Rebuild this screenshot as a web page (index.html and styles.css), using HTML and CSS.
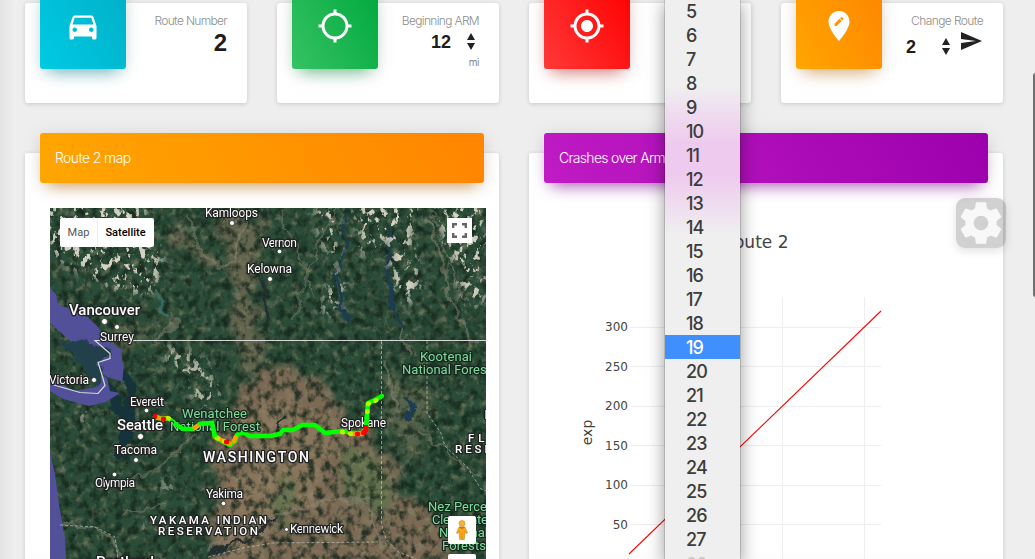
FILE: index.html
```html
<!DOCTYPE html>
<html lang="en">
<head>
<meta charset="utf-8">
<title>Route dashboard</title>
<link rel="stylesheet" href="styles.css">
</head>
<body>
<main class="dashboard">
  <section class="card stat">
    <div class="tile cyan"><svg class="icon" viewBox="0 0 24 24"><path d="M18.92 6.01C18.72 5.42 18.16 5 17.5 5h-11c-.66 0-1.21.42-1.42 1.01L3 12v8c0 .55.45 1 1 1h1c.55 0 1-.45 1-1v-1h12v1c0 .55.45 1 1 1h1c.55 0 1-.45 1-1v-8l-2.08-5.99zM6.5 16c-.83 0-1.5-.67-1.5-1.5S5.67 13 6.5 13s1.5.67 1.5 1.5S7.33 16 6.5 16zm11 0c-.83 0-1.5-.67-1.5-1.5s.67-1.5 1.5-1.5 1.5.67 1.5 1.5-.67 1.5-1.5 1.5zM5 11l1.5-4.5h11L19 11H5z"/></svg></div>
    <div class="info"><p class="label">Route Number</p><p class="big">2</p></div>
  </section>
  <section class="card stat">
    <div class="tile green"><svg class="icon" viewBox="0 0 24 24"><path d="M20.94 11c-.46-4.17-3.77-7.48-7.94-7.94V1h-2v2.06C6.83 3.52 3.52 6.83 3.06 11H1v2h2.06c.46 4.17 3.77 7.48 7.94 7.94V23h2v-2.06c4.17-.46 7.48-3.77 7.94-7.94H23v-2h-2.06zM12 19c-3.87 0-7-3.13-7-7s3.13-7 7-7 7 3.13 7 7-3.13 7-7 7z"/></svg></div>
    <div class="info"><p class="label">Beginning ARM</p>
      <div class="pick arm"><span>12</span><svg class="arrows" viewBox="0 0 8 17"><path d="M4 0l4 7H0zM0 10h8l-4 7z"/></svg></div>
      <p class="unit">mi</p></div>
  </section>
  <section class="card stat">
    <div class="tile red"><svg class="icon" viewBox="0 0 24 24"><path d="M12 8c-2.21 0-4 1.79-4 4s1.79 4 4 4 4-1.79 4-4-1.79-4-4-4zm8.94 3c-.46-4.17-3.77-7.48-7.94-7.94V1h-2v2.06C6.83 3.52 3.52 6.83 3.06 11H1v2h2.06c.46 4.17 3.77 7.48 7.94 7.94V23h2v-2.06c4.17-.46 7.48-3.77 7.94-7.94H23v-2h-2.06zM12 19c-3.87 0-7-3.13-7-7s3.13-7 7-7 7 3.13 7 7-3.13 7-7 7z"/></svg></div>
  </section>
  <section class="card stat">
    <div class="tile orange"><svg class="icon" viewBox="0 0 24 24"><path d="M12 2C8.14 2 5 5.14 5 9c0 5.25 7 13 7 13s7-7.75 7-13c0-3.86-3.14-7-7-7zm-1.56 10H9v-1.44l3.35-3.34 1.43 1.43L10.44 12zm4.45-4.45l-.7.7-1.44-1.44.7-.7c.15-.15.39-.15.54 0l.9.9c.15.15.15.39 0 .54z"/></svg></div>
    <div class="info"><p class="label change">Change Route</p>
      <div class="pick route"><span>2</span><svg class="arrows" viewBox="0 0 8 17"><path d="M4 0l4 7H0zM0 10h8l-4 7z"/></svg><svg class="send" viewBox="2 3 21 18"><path d="M2.01 21L23 12 2.01 3 2 10l15 2-15 2z"/></svg></div></div>
  </section>

  <section class="card panel">
    <h2 class="bar orange-bar">Route 2 map</h2>
    <div class="map">
      <svg class="terrain" viewBox="50 208 436 351" width="436" height="351">
        <defs>
          <filter id="soft" x="-30%" y="-30%" width="160%" height="160%"><feGaussianBlur stdDeviation="6"/></filter>
          <filter id="rough" x="-10%" y="-10%" width="120%" height="120%"><feTurbulence type="fractalNoise" baseFrequency=".06" numOctaves="4" seed="4" result="n"/><feDisplacementMap in="SourceGraphic" in2="n" scale="16" xChannelSelector="R" yChannelSelector="G"/><feGaussianBlur stdDeviation=".7"/></filter>
          <filter id="blend" x="-10%" y="-10%" width="120%" height="120%"><feTurbulence type="fractalNoise" baseFrequency=".05" numOctaves="4" seed="7" result="n"/><feDisplacementMap in="SourceGraphic" in2="n" scale="34" xChannelSelector="R" yChannelSelector="G"/><feGaussianBlur stdDeviation="3"/></filter>
          <filter id="relief" x="0" y="0" width="100%" height="100%" color-interpolation-filters="sRGB"><feTurbulence type="fractalNoise" baseFrequency=".13 .11" numOctaves="5" seed="8"/><feColorMatrix values="0 0 0 0 .07  0 0 0 0 .14  0 0 0 0 .1  3 0 0 0 -1.3"/></filter>
          <filter id="light" x="0" y="0" width="100%" height="100%" color-interpolation-filters="sRGB"><feTurbulence type="fractalNoise" baseFrequency=".12" numOctaves="5" seed="21"/><feColorMatrix values="0 0 0 0 .55  0 0 0 0 .54  0 0 0 0 .42  0 2.4 0 0 -1.2"/></filter>
          <filter id="peaks" x="0" y="0" width="100%" height="100%" color-interpolation-filters="sRGB"><feTurbulence type="fractalNoise" baseFrequency=".15 .11" numOctaves="4" seed="12"/><feColorMatrix values="0 0 0 0 .84  0 0 0 0 .82  0 0 0 0 .76  0 11 0 0 -6.2"/></filter>
          <mask id="snowfields"><g fill="#fff" filter="url(#soft)">
            <path d="M45 200H145L148 230 164 260 156 292 124 294 85 275 45 250z"/>
            <path d="M315 200l22 0 2 70 8 15-16 34-10-10 15-42-18-35zM352 200H420L412 240 422 285 412 308 392 285 386 235 362 260zM430 200H486V300L465 310 455 270z"/>
            <path opacity=".8" d="M160 352l15-8 32 16 18 45-22 10-20-30z"/>
            <path opacity=".7" d="M160 480h16v12h-16zM75 410h18v14H75zM141 522h12v12h-12z"/></g></mask>
        </defs>
        <rect x="50" y="208" width="436" height="351" fill="#2b4c38"/>
        <g filter="url(#blend)">
          <path fill="#7b6b55" d="M238 395l30-25 30-4 28 10 10 32 30 22 30 35 5 28 28 22 28 38-35 20H205l5-50 8-45-12-30 25-30z"/>
          <path fill="#8e775d" opacity=".75" d="M250 410l42-14 48 35-22 34 10 40-50 10-38 50-24-6 10-60 22-40z"/>
          <path fill="#62714e" opacity=".9" d="M345 440l35 18 16 36-10 28-30-18-16-32zM275 475l15 5 4 44-18 3z"/>
          <path fill="#7c705a" opacity=".7" d="M235 208l30 12-4 30-8 50 14 60-18 30-22-78 8-60-20-28zM178 208l15 38 32 20-8 8-45-32z"/>
          <path fill="#6d7055" opacity=".65" d="M105 325l18 8 38-10 25-18-18 25-42 24-20-6zM380 370l50 18-10 70-25-20z"/>
        </g>
        <rect x="50" y="208" width="436" height="351" filter="url(#light)" opacity=".75"/>
        <rect x="50" y="208" width="436" height="351" filter="url(#relief)" opacity=".8"/>
        <g fill="none" stroke-linecap="round" filter="url(#rough)">
          <path stroke="#1f3c50" stroke-width="4" d="M343 220v30l-6 24 2 35 10 8M389 230v40l3 40 9 18M407 397l8 12-6 10"/>
          <path stroke="#8c8774" opacity=".5" stroke-width="3" d="M190 212l8 35 20 18 18-4 10-48M430 220l12 38 8 46 25 40M402 330l12 25M385 362l10 48M155 340l22-18M208 550l45-28 65-20 50-4 15 50M60 525l35 2 20 10 5 22"/>
          <path stroke="#8c8774" opacity=".45" stroke-width="2" d="M105 486l40-8 50-42M338 208l-30 60-15 50M430 208l40 100M125 515l42-10M420 430l60 48M280 210l34 88"/>
          <path stroke="#232d33" stroke-width="3" d="M264 280l-1 20 8 24M284 419l-8 12M276 520l-24 18-42 14"/>
          <path stroke="#3b7770" opacity=".7" stroke-width="4" d="M155 290l12 25"/>
          <path stroke="#15303a" stroke-width="10" d="M128 375l3 46-5 20-7 15M105 382l18 35"/>
        </g>
        <rect x="50" y="208" width="436" height="351" filter="url(#peaks)" mask="url(#snowfields)"/>
        <g fill="#515099">
          <path d="M50 288l6 6 2 10 12 5 18 8 10 10 9 14 14 8 2 20-3 12-13-4-16-12-14-18-27-24z"/>
          <path d="M50 382h9l15 9 22-4 4-13 7 4 3 13 10 2-14 9-17 4-26-7-13-8z"/>
          <path d="M50 452l5 22 4 30 6 35 1 20H50z"/>
          <path d="M120 360l4 5-2 18-5-7z"/>
        </g>
        <path fill="#20404a" d="M95 342l16 12-1 6-12 2 6 20-8 5-16-24-20-20z" filter="url(#rough)"/>
        <path d="M486 340.5H95l15 13v5l-12 4 5 16 2 7-7 8-18-1-28-8" fill="none" stroke="#d7d9d8" stroke-width="1.2"/>
        <g fill="none" stroke="#c4c9bd" stroke-width=".9" stroke-dasharray="3 2" opacity=".75">
          <path d="M381.500 341V525l5 15 12 12 18 7M427 341v72l14 20 4 13 22 21 14 22 8 3M60 525l35 2 20 10 3 22M208 557l35-9 30-5 105-1"/>
        </g>
        <g fill="none" stroke-width="4.500" stroke-linejoin="round" stroke-linecap="round">
          <path stroke="#0f0" d="M155 417l8 2 5-1 15 11h10l7-5 12-1 3 14 7 4 8 4 5-4 2-6 5-3 8 4h20l10-2 3-4h10l9-5h13l10 8 18-2 10 2h9l4-5 1-13 1-12 7-3 7-4"/>
          <path stroke="#ff9d00" stroke-dasharray="4 3" d="M155 417l8 2 5-1M194 429l5-4M216 437l7 4 7 3M234 441l2-5M351 434h11l4-5"/>
          <path stroke="#b8f500" stroke-dasharray="1 7" d="M168 418l2 1M217 438l14 7M342 432l10 2M367 420l1-16 7-3 7-4"/>
          <path stroke="red" d="M155 416v1M163 419h1M226 442h1M357 434h1M363 433l3-3v-5"/>
        </g>
        <g class="names">
          <g class="town" font-size="12">
            <text x="205" y="217" textLength="53">Kamloops</text><text x="262" y="247" textLength="35">Vernon</text><text x="247" y="273" textLength="45">Kelowna</text><text x="100" y="341" textLength="34">Surrey</text><text x="49" y="384" textLength="40">Victoria</text><text x="130" y="406" textLength="34">Everett</text><text x="114" y="454" textLength="43">Tacoma</text><text x="95" y="487" textLength="40">Olympia</text><text x="206" y="498" textLength="37">Yakima</text><text x="290" y="533" textLength="53">Kennewick</text><text x="341" y="427" textLength="45">Spokane</text>
          </g>
          <g class="city" font-size="15"><text x="69" y="315" textLength="71">Vancouver</text><text x="117" y="430" textLength="46">Seattle</text><text x="96" y="567" textLength="58">Portland</text></g>
          <g class="state"><text x="203" y="462" font-size="14" textLength="106">WASHINGTON</text></g>
          <g class="region" font-size="11.500"><text x="150" y="524" textLength="117">YAKAMA INDIAN</text><text x="158" y="535" textLength="100">RESERVATION</text><text x="468" y="442" textLength="28">FLA</text><text x="455" y="453" textLength="36">RESE</text></g>
          <g class="forest" font-size="13"><text x="182" y="418" textLength="65">Wenatchee</text><text x="170" y="431" textLength="90">National Forest</text><text x="420" y="361" textLength="52">Kootenai</text><text x="402" y="374" textLength="89">National Forest</text><text x="428" y="511" textLength="59">Nez Perce</text><text x="432" y="524" textLength="60">Clearwater</text><text x="439" y="537" textLength="49">National</text><text x="442" y="550" textLength="44">Forests</text><text x="484" y="419">L</text></g>
        </g>
        <path d="M174 423l9 6h10l7-5 12-1 3 14M366 429l1-13" fill="none" stroke="#0f0" stroke-width="4.500"/>
        <path d="M193 429l6-4" stroke="#ff9d00" stroke-width="4.500"/>
        <path d="M363 433l3-3v-5" fill="none" stroke="red" stroke-width="4.500"/>
        <g fill="#fff" stroke="#222" stroke-width=".7"><circle cx="232" cy="223" r="2.500"/><circle cx="279.500" cy="251.500" r="2.300"/><circle cx="270" cy="279" r="2.500"/><circle cx="104.500" cy="321.500" r="3"/><circle cx="117" cy="327" r="2.500"/><circle cx="94" cy="380" r="2.500"/><circle cx="146.500" cy="410.500" r="2.300"/><circle cx="140.500" cy="436.500" r="3"/><circle cx="136" cy="460" r="2.500"/><circle cx="114.500" cy="474.500" r="2.300"/><circle cx="223.500" cy="503.500" r="2.300"/><circle cx="286.500" cy="529.500" r="2"/></g>
      </svg>
      <div class="map-type"><span>Map</span><span class="active">Satellite</span></div>
      <div class="full"><svg viewBox="0 0 15 15" width="15" height="15"><path d="M1.200 5V1.200H5M10 1.200h3.800V5M13.800 10v3.800H10M5 13.800H1.200V10" fill="none" stroke="#666" stroke-width="2.400"/></svg></div>
      <div class="pegman"><svg viewBox="0 0 12 20" width="12" height="20"><path fill="#f9a71a" stroke="#cf8417" stroke-width=".6" d="M3 7h6l2.500 6-1.300.6L9 11l-.7 8.500H3.700L3 11l-1.200 2.600L.5 13z"/><circle cx="6" cy="3.500" r="3" fill="#fbb32c" stroke="#cf8417" stroke-width=".6"/><path d="M3.500 7.300h5L6 9zM6 13v6" fill="#bd7114" stroke="#bd7114" stroke-width=".4"/></svg></div>
      <div class="zoom-control"></div>
    </div>
  </section>

  <section class="card panel">
    <h2 class="bar purple-bar">Crashes over Arm</h2>
    <svg class="chart" viewBox="529 183 474 376" width="474" height="376">
      <path stroke="#eee" fill="none" d="M630 327.500H881M630 366.500H881M630 406.500H881M630 445.500H881M630 485.500H881M630 524.500H881M701.500 297V559M782.500 297V559M864.500 297V559"/>
      <path d="M629 554L881 311" fill="none" stroke="#f00" stroke-width="1.100"/>
      <g class="ticks" text-anchor="end"><text x="628" y="331">300</text><text x="628" y="371">250</text><text x="628" y="410">200</text><text x="628" y="450">150</text><text x="628" y="489">100</text><text x="628" y="529">50</text></g>
      <text class="chart-title" x="788.500" y="248" text-anchor="end">Route 2</text>
      <text class="axis" transform="translate(591.500 432.500) rotate(-90)" text-anchor="middle">exp</text>
    </svg>
  </section>
</main>

<ul class="menu">
  <li>5</li><li>6</li><li>7</li><li>8</li><li>9</li><li>10</li><li>11</li><li>12</li><li>13</li><li>14</li><li>15</li><li>16</li><li>17</li><li>18</li><li class="selected">19</li><li>20</li><li>21</li><li>22</li><li>23</li><li>24</li><li>25</li><li>26</li><li>27</li><li class="faded">28</li>
</ul>
<div class="settings"><svg viewBox="0 0 24 24"><path d="M19.430 12.980c.04-.32.07-.64.07-.98s-.03-.66-.07-.98l2.110-1.650c.19-.15.24-.42.12-.64l-2-3.460c-.12-.22-.39-.3-.61-.22l-2.490 1c-.52-.4-1.080-.73-1.690-.98l-.38-2.650C14.460 2.180 14.250 2 14 2h-4c-.25 0-.46.18-.49.42l-.38 2.650c-.61.25-1.170.59-1.690.98l-2.490-1c-.23-.09-.49 0-.61.22l-2 3.460c-.13.22-.07.49.12.64l2.110 1.650c-.04.32-.07.65-.07.98s.03.66.07.98l-2.110 1.650c-.19.15-.24.42-.12.64l2 3.460c.12.22.39.3.61.22l2.490-1c.52.4 1.080.73 1.690.98l.38 2.650c.03.24.24.42.49.42h4c.25 0 .46-.18.49-.42l.38-2.650c.61-.25 1.170-.59 1.690-.98l2.490 1c.23.09.49 0 .61-.22l2-3.460c.12-.22.07-.49-.12-.64l-2.110-1.650zM12 15.500c-1.930 0-3.500-1.570-3.500-3.500s1.570-3.500 3.500-3.500 3.500 1.570 3.500 3.500-1.570 3.500-3.500 3.500z"/></svg></div>
<div class="scroll-thumb"></div>
</body>
</html>
```

FILE: styles.css
```css
* { box-sizing: border-box; }
html, body { height: 559px; overflow: hidden; }
body { margin: 0; position: relative; background: linear-gradient(90deg, #e3e3e3, #eee 14px); font-family: "Liberation Sans", Arial, sans-serif; }
p, h2, ul { margin: 0; padding: 0; }
.dashboard { display: grid; grid-template-columns: repeat(4, 222px); grid-template-rows: 100px 420px; column-gap: 30px; row-gap: 50px; padding: 3px 0 0 25px; }
.card { background: #fff; border-radius: 3px; box-shadow: 0 1px 4px rgba(0,0,0,.16); }
.stat { display: flex; justify-content: space-between; padding: 0 20px 0 15px; }
.tile { width: 86px; height: 86px; margin-top: -20px; border-radius: 3px; display: flex; align-items: center; justify-content: center; }
.icon { width: 36px; height: 36px; fill: #fff; }
.cyan { background: linear-gradient(60deg, #00cae3, #00b0c8); box-shadow: 0 10px 16px -8px rgba(0,130,150,.6), 0 2px 18px rgba(0,0,0,.07); }
.green { background: linear-gradient(60deg, #36c264, #00a83d); box-shadow: 0 10px 16px -8px rgba(0,140,60,.6), 0 2px 18px rgba(0,0,0,.07); }
.red { background: linear-gradient(60deg, #ff3939, #f00); box-shadow: 0 10px 16px -8px rgba(190,20,10,.6), 0 2px 18px rgba(0,0,0,.07); }
.orange { background: linear-gradient(60deg, #ffa600, #ff8500); box-shadow: 0 10px 16px -8px rgba(200,110,0,.6), 0 2px 18px rgba(0,0,0,.07); }
.info { display: flex; flex-direction: column; align-items: flex-end; padding-top: 10px; }
.label { font: 300 12px/16px "Inter", sans-serif; letter-spacing: -.67px; color: #8d8d8d; white-space: nowrap; }
.label.change { letter-spacing: -.6px; }
.big { font-size: 24px; line-height: 26px; font-weight: bold; color: #1d1d1d; margin-top: 1px; }
.pick { display: flex; color: #1d1d1d; font-weight: bold; font-size: 18px; line-height: 20px; }
.arrows { width: 8px; height: 17px; fill: #222; }
.arm { margin: 3px 4px 0 0; gap: 16px; }
.arm .arrows { margin-top: 1px; }
.route { margin-top: 3px; align-items: flex-start; }
.route span { margin-top: 5px; }
.route .arrows { margin: 6px 11px 0 26px; }
.send { width: 21px; height: 18px; fill: #222; margin-right: 1px; }
.unit { font: 300 10px/14px "Inter", sans-serif; letter-spacing: -.4px; color: #666; margin-top: 3px; }
.panel { grid-column: span 2; display: flex; flex-direction: column; background: linear-gradient(#fff 94%, #f9f9f9); }
.bar { flex: none; width: 444px; height: 50px; margin: -20px 0 0 15px; padding-left: 15px; border-radius: 3px; color: #fff; font: 300 14px/50px "Inter", sans-serif; letter-spacing: -.6px; }
.orange-bar { background: linear-gradient(60deg, #ffa600, #ff8500); box-shadow: 0 10px 16px -8px rgba(200,110,0,.65), 0 2px 18px rgba(0,0,0,.1); }
.purple-bar { letter-spacing: -.7px; background: linear-gradient(60deg, #c01bc4, #9c00ad); box-shadow: 0 10px 16px -8px rgba(145,0,160,.65), 0 2px 18px rgba(0,0,0,.1); }
.map { position: relative; width: 436px; height: 351px; margin: 25px 0 0 25px; overflow: hidden; }
.terrain, .chart { display: block; }
.chart { flex: none; }
.names { font-family: Roboto, sans-serif; fill: #fff; paint-order: stroke; stroke: #222; stroke-width: 2.6px; stroke-linejoin: round; }
.city, .state, .region { font-weight: 500; }
.forest { fill: #80d99d; stroke: #15281c; }
.map-type { position: absolute; left: 10px; top: 10px; display: flex; height: 29px; border-radius: 2px; background: #fff; font: 11px/29px Roboto, sans-serif; color: #565656; }
.map-type span { width: 37px; text-align: center; }
.map-type .active { width: 57px; padding-right: 1px; border-left: 1px solid #eee; color: #000; font-weight: 500; }
.full { position: absolute; left: 397px; top: 10px; width: 25px; height: 25px; display: grid; place-items: center; background: #fff; }
.pegman { position: absolute; left: 398px; top: 308px; width: 28px; height: 28px; display: grid; place-items: center; background: #fff; border-radius: 2px; }
.zoom-control { position: absolute; left: 398px; top: 346px; width: 28px; height: 28px; background: #fff; border-radius: 2px; }
.ticks { font: 12px "DejaVu Sans", sans-serif; fill: #444; }
.chart-title { font: 17px "DejaVu Sans", sans-serif; fill: #444; }
.axis { font: 14px "DejaVu Sans", sans-serif; fill: #444; }
.menu { position: absolute; left: 665px; top: -1px; width: 75px; height: 562px; overflow: hidden; list-style: none; color: #3c3c3c; font: 500 18px/25px "Inter", sans-serif; letter-spacing: -.9px; background: linear-gradient(#efefef 88px, #efdcef 115px, #eecaee 145px, #eecaee 175px, #efdcef 205px, #efefef 235px); box-shadow: 0 0 0 1px rgba(0,0,0,.13), 0 4px 17px rgba(0,0,0,.42); }
.menu li { height: 24px; padding-left: 21px; }
.menu .selected { background: #3f8fff; color: #fff; }
.menu .faded { color: #ccc; line-height: 27px; }
.settings { position: absolute; left: 956px; top: 198px; width: 50px; height: 50px; border-radius: 9px; background: rgba(0,0,0,.18); box-shadow: 0 3px 10px rgba(0,0,0,.12); }
.settings svg { display: block; width: 50px; height: 50px; fill: #f8f8f8; }
.scroll-thumb { position: absolute; left: 1033px; top: 73px; width: 5px; height: 224px; border-radius: 3px; background: #707070; }
```
